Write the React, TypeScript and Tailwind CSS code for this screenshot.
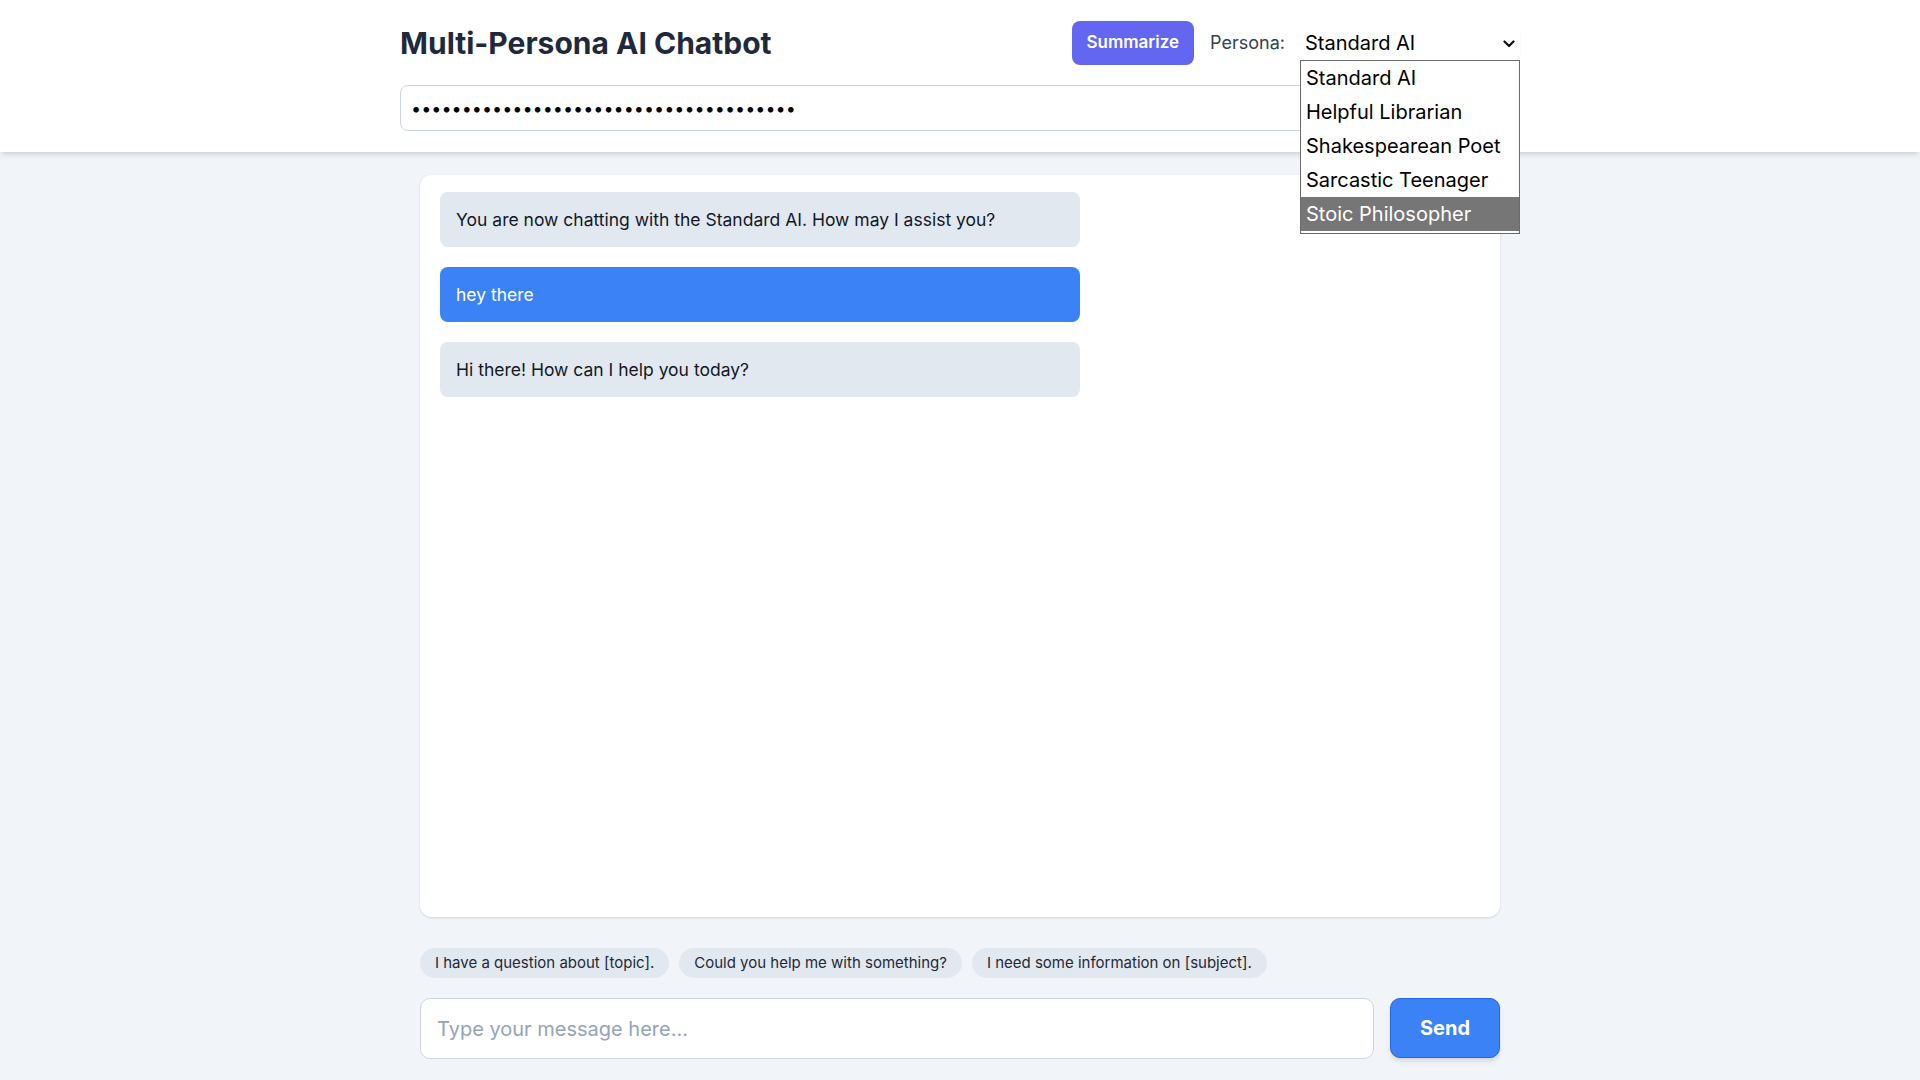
import React from "react";

const personas = [
  "Standard AI",
  "Helpful Librarian",
  "Shakespearean Poet",
  "Sarcastic Teenager",
  "Stoic Philosopher",
];

const suggestions = [
  "I have a question about [topic].",
  "Could you help me with something?",
  "I need some information on [subject].",
];

const messages = [
  { from: "ai", text: "You are now chatting with the Standard AI. How may I assist you?" },
  { from: "user", text: "hey there" },
  { from: "ai", text: "Hi there! How can I help you today?" },
];

const App = () => {
  return (
    <div className="h-screen flex flex-col bg-[#f1f5f9] font-['Inter',sans-serif]">
      {/* ====== Header */}
      <header className="bg-white shadow-md relative z-10">
        <div className="max-w-6xl mx-auto px-4 pt-[21px] pb-[21px]">
          <div className="flex items-center justify-between h-11">
            <h1 className="text-3xl font-bold text-[#1e293b]">Multi-Persona AI Chatbot</h1>
            <div className="flex items-center">
              <button className="h-11 px-[15px] rounded-lg bg-[#6366f1] text-white text-[17px] font-semibold">
                Summarize
              </button>
              <label className="ml-4 text-lg text-[#334155]">Persona:</label>
              <div className="relative ml-[15px]">
                <select
                  defaultValue="Standard AI"
                  className="appearance-none w-[220px] h-[34px] pl-[5px] bg-white rounded-md text-[20px] text-black shadow-[0_1px_2px_rgba(0,0,0,0.06)] outline-none"
                >
                  {personas.map((p) => (
                    <option key={p}>{p}</option>
                  ))}
                </select>
                <svg
                  className="absolute right-[5px] top-[14px] pointer-events-none"
                  width="12"
                  height="8"
                  viewBox="0 0 12 8"
                  fill="none"
                >
                  <polyline points="1.5,1.5 6,6 10.5,1.5" stroke="#111" strokeWidth="2.2" strokeLinecap="round" strokeLinejoin="round" />
                </svg>
                <div className="absolute left-0 top-[34px] w-[220px] bg-white border border-[#6b6b6b] pb-[2px] z-20">
                  {personas.map((p, i) => (
                    <div
                      key={p}
                      className={
                        i === personas.length - 1
                          ? "h-[34px] px-[5px] flex items-center text-[20px] bg-[#767676] text-white"
                          : "h-[34px] px-[5px] flex items-center text-[20px] text-black"
                      }
                    >
                      {p}
                    </div>
                  ))}
                </div>
              </div>
            </div>
          </div>
          <input
            type="password"
            defaultValue="sk-abcdefghijklmnopqrstuvwxyz012345678"
            className="mt-[20px] w-full h-[46px] border border-[#cbd5e1] rounded-lg px-[10px] text-lg text-black outline-none"
          />
        </div>
      </header>

      {/* ====== Chat */}
      <main className="flex-1 min-h-0 flex flex-col max-w-6xl w-full mx-auto px-9 pt-[23px] pb-[21px]">
        <div className="flex-1 min-h-0 bg-white rounded-xl shadow-sm px-5 pt-[17px] flex flex-col gap-5">
          {messages.map((m, i) => (
            <div
              key={i}
              className={
                m.from === "user"
                  ? "w-[640px] rounded-lg bg-[#3b82f6] text-white px-4 py-[14px] text-[17.5px] leading-[27px]"
                  : "w-[640px] rounded-lg bg-[#e2e8f0] text-[#111827] px-4 py-[14px] text-[17.5px] leading-[27px]"
              }
            >
              {m.text}
            </div>
          ))}
        </div>

        <div className="mt-[31px] flex gap-2.5">
          {suggestions.map((s) => (
            <button
              key={s}
              className="h-[30px] px-[15px] rounded-full bg-[#e2e8f0] text-[#1f2937] text-[15px]"
            >
              {s}
            </button>
          ))}
        </div>

        <div className="mt-5 flex gap-4">
          <input
            placeholder="Type your message here..."
            className="flex-1 h-[61px] bg-white border border-[#cbd5e1] rounded-[10px] px-4 text-xl placeholder:text-[#94a3b8] outline-none"
          />
          <button className="w-[110px] h-[60px] rounded-[10px] bg-[#3b82f6] border border-[#2563eb] text-white text-xl font-bold shadow-md">
            Send
          </button>
        </div>
      </main>
    </div>
  );
};

export default App;
